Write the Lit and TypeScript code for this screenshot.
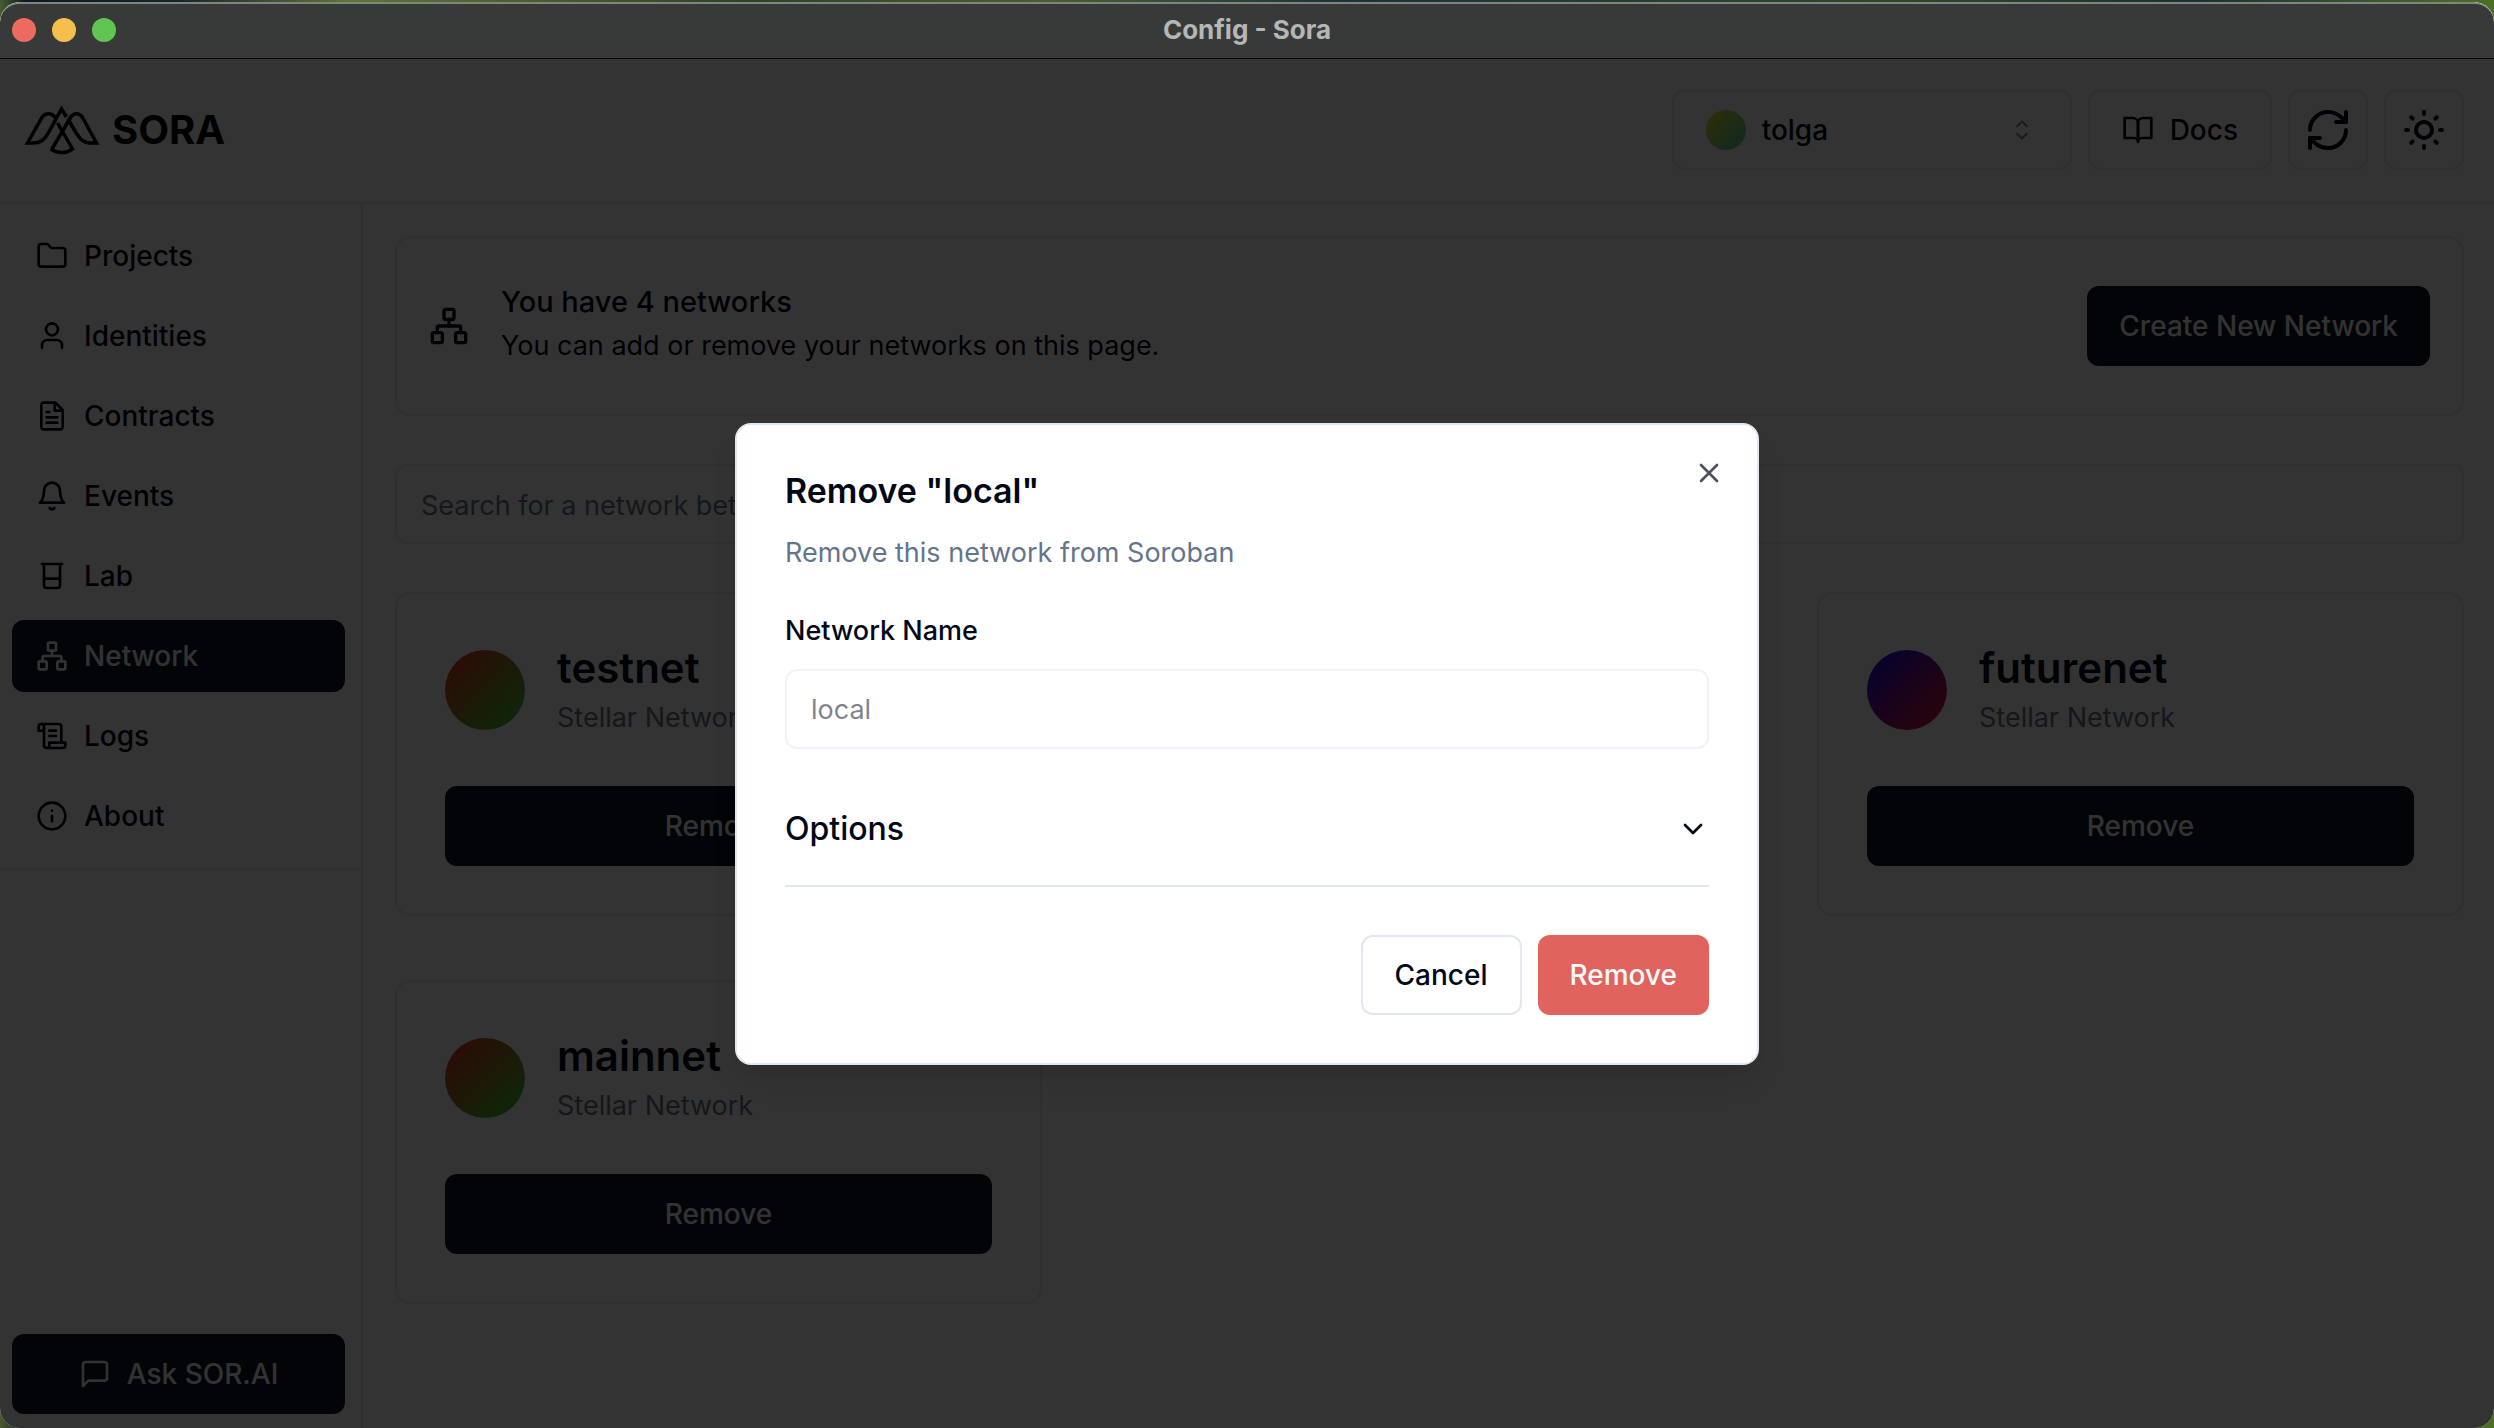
import { LitElement, html, css, svg } from "lit";
import { customElement, property, state } from "lit/decorators.js";
import { classMap } from "lit/directives/class-map.js";

const icons: Record<string, unknown> = {
  folder: svg`<path d="M4 20h16a2 2 0 0 0 2-2V8a2 2 0 0 0-2-2h-7.93a2 2 0 0 1-1.66-.9l-.82-1.2A2 2 0 0 0 7.93 3H4a2 2 0 0 0-2 2v13c0 1.1.9 2 2 2Z"/>`,
  user: svg`<circle cx="12" cy="7" r="4.5"/><path d="M19.500 21v-2a4 4 0 0 0-4-4h-7a4 4 0 0 0-4 4v2"/>`,
  file: svg`<path d="M14.500 2H6a2 2 0 0 0-2 2v16a2 2 0 0 0 2 2h12a2 2 0 0 0 2-2V7.500L14.500 2z"/><path d="M14 2v6h6"/><path d="M16 13H8"/><path d="M16 17H8"/><path d="M10 9H8"/>`,
  bell: svg`<path d="M6 8a6 6 0 0 1 12 0c0 7 3 9 3 9H3s3-2 3-9"/><path d="M10.300 21a1.940 1.940 0 0 0 3.400 0"/>`,
  beaker: svg`<path d="M4.500 3h15"/><path d="M6 3v16a2 2 0 0 0 2 2h8a2 2 0 0 0 2-2V3"/><path d="M6 14h12"/>`,
  network: svg`<rect x="16" y="16" width="6" height="6" rx="1"/><rect x="2" y="16" width="6" height="6" rx="1"/><rect x="9" y="2" width="6" height="6" rx="1"/><path d="M5 16v-3a1 1 0 0 1 1-1h12a1 1 0 0 1 1 1v3"/><path d="M12 12V8"/>`,
  scroll: svg`<path d="M8 21h12a2 2 0 0 0 2-2v-2H10v2a2 2 0 1 1-4 0V5a2 2 0 1 0-4 0v3h4"/><path d="M19 17V5a2 2 0 0 0-2-2H4"/><path d="M15 8h-5"/><path d="M15 12h-5"/>`,
  info: svg`<circle cx="12" cy="12" r="10"/><path d="M12 16v-4"/><path d="M12 8h.01"/>`,
  message: svg`<path d="M21 15a2 2 0 0 1-2 2H7l-4 4V5a2 2 0 0 1 2-2h14a2 2 0 0 1 2 2z"/>`,
  book: svg`<path d="M2 3h6a4 4 0 0 1 4 4v14a3 3 0 0 0-3-3H2z"/><path d="M22 3h-6a4 4 0 0 0-4 4v14a3 3 0 0 1 3-3h7z"/>`,
  refresh: svg`<path d="M3 12a9 9 0 0 1 9-9 9.750 9.750 0 0 1 6.740 2.740L21 8"/><path d="M21 3v5h-5"/><path d="M21 12a9 9 0 0 1-9 9 9.750 9.750 0 0 1-6.740-2.740L3 16"/><path d="M8 16H3v5"/>`,
  sun: svg`<circle cx="12" cy="12" r="4"/><path d="M12 3v1"/><path d="M12 20v1"/><path d="M3 12h1"/><path d="M20 12h1"/><path d="m18.364 5.636-.707.707"/><path d="m6.343 17.657-.707.707"/><path d="m5.636 5.636.707.707"/><path d="m17.657 17.657.707.707"/>`,
  close: svg`<path d="M18 6 6 18"/><path d="m6 6 12 12"/>`,
  chevron: svg`<path d="m6 9 6 6 6-6"/>`,
};

@customElement("ui-icon")
export class UiIcon extends LitElement {
  @property() name = "";

  static styles = css`
    :host {
      display: inline-flex;
      flex: none;
      width: 32px;
      height: 32px;
    }
    .glyph {
      width: 100%;
      height: 100%;
      fill: none;
      stroke: currentColor;
      stroke-width: 2;
      stroke-linecap: round;
      stroke-linejoin: round;
    }
  `;

  render() {
    return html`<svg class="glyph" viewBox="0 0 24 24" aria-hidden="true">${icons[this.name]}</svg>`;
  }
}

const navItems = [
  { icon: "folder", label: "Projects" },
  { icon: "user", label: "Identities" },
  { icon: "file", label: "Contracts" },
  { icon: "bell", label: "Events" },
  { icon: "beaker", label: "Lab" },
  { icon: "network", label: "Network" },
  { icon: "scroll", label: "Logs" },
  { icon: "info", label: "About" },
];

const networks = [
  { name: "testnet", tone: "warm" },
  { name: "local", tone: "cool" },
  { name: "futurenet", tone: "cool" },
  { name: "mainnet", tone: "warm" },
];

@customElement("app-root")
export class AppRoot extends LitElement {
  @state() private active = "Network";
  @state() private dialogOpen = true;

  static styles = css`
    :host {
      display: block;
      color: #020817;
      font-family: Inter, "Liberation Sans", sans-serif;
      font-size: 27px;
      line-height: 40px;
    }
    *,
    *::before,
    *::after {
      box-sizing: border-box;
    }
    h1,
    h2,
    h3,
    p {
      margin: 0;
    }
    button,
    input,
    select {
      font: inherit;
      color: inherit;
      margin: 0;
    }
    button {
      cursor: pointer;
    }
    a {
      color: inherit;
      text-decoration: none;
    }

    .desktop {
      display: flex;
      min-height: 100vh;
      padding-top: 2px;
      background: linear-gradient(90deg, #4a5a30 0%, #0b1c24 1%, #12262a 7%, #5f7530 14%, #2a4420 30%, #46602a 42%, #16343a 54%, #2c4a22 76%, #173230 88%, #4c7022 100%);
    }
    .window {
      flex: 1;
      display: flex;
      flex-direction: column;
      overflow: hidden;
      border-radius: 20px;
      background: #ffffff;
    }
    .titlebar {
      display: grid;
      grid-template-columns: 1fr auto 1fr;
      align-items: center;
      height: 57px;
      padding: 0 12px 2px;
      border-top: 2px solid #828483;
      border-bottom: 1px solid #000000;
      border-radius: 20px 20px 0 0;
      background: #383a39;
    }
    .lights {
      display: flex;
      gap: 16px;
    }
    .light {
      width: 24px;
      height: 24px;
      padding: 0;
      border: 0;
      border-radius: 50%;
    }
    .light.red {
      background: #ed6a5e;
    }
    .light.amber {
      background: #f5bf4f;
    }
    .light.green {
      background: #61c554;
    }
    .window-title {
      color: #b5b6b6;
      font-size: 26px;
      line-height: 32px;
      font-weight: 700;
    }

    .body {
      position: relative;
      flex: 1;
      display: flex;
      flex-direction: column;
    }
    .topbar {
      display: flex;
      align-items: center;
      justify-content: space-between;
      padding: 31px 30px 32px 24px;
      border-bottom: 2px solid #e2e8f0;
    }
    .brand {
      display: flex;
      align-items: center;
      gap: 12px;
      color: #000000;
      font-size: 40px;
      line-height: 48px;
      font-weight: 700;
    }
    .brand-mark {
      width: 76px;
      height: 52px;
      fill: none;
      stroke: currentColor;
      stroke-width: 3.5;
      stroke-linejoin: miter;
    }
    .tools {
      display: flex;
      gap: 16px;
    }
    .account,
    .tool {
      display: flex;
      align-items: center;
      height: 80px;
      gap: 16px;
      border: 2px solid #e2e8f0;
      border-radius: 12px;
      background: #ffffff;
      font-size: 28px;
      font-weight: 500;
    }
    .account {
      width: 400px;
      padding: 0 32px;
    }
    .account-avatar {
      flex: none;
      width: 40px;
      height: 40px;
      border-radius: 50%;
      background: linear-gradient(135deg, #f0e614, #3cc8b4);
    }
    .account-select {
      flex: 1;
      min-width: 0;
      padding: 0;
      border: 0;
      appearance: none;
      background: transparent;
    }
    .caret {
      flex: none;
      width: 32px;
      height: 32px;
      fill: currentColor;
      opacity: 0.5;
    }
    .tool {
      padding: 0 32px;
    }
    .tool.square {
      width: 80px;
      padding: 0;
      justify-content: center;
    }
    .tool.square ui-icon {
      width: 48px;
      height: 48px;
    }

    .columns {
      flex: 1;
      display: flex;
    }
    .sidebar {
      flex: none;
      display: flex;
      flex-direction: column;
      justify-content: space-between;
      width: 363px;
      border-right: 2px solid #e2e8f0;
    }
    .nav {
      display: flex;
      flex-direction: column;
      gap: 8px;
      padding: 16px 16px 16px 12px;
      border-bottom: 2px solid #e2e8f0;
    }
    .nav-link {
      display: flex;
      align-items: center;
      gap: 16px;
      height: 72px;
      padding: 0 24px;
      border-radius: 12px;
      font-size: 28px;
      font-weight: 500;
    }
    .nav-link.active {
      background: #0f172a;
      color: #f8fafc;
    }
    .ask {
      display: flex;
      padding: 14px 16px 14px 12px;
    }

    .primary {
      display: flex;
      align-items: center;
      justify-content: center;
      gap: 16px;
      height: 80px;
      padding: 0 32px;
      border: 0;
      border-radius: 12px;
      background: #0f172a;
      color: #f8fafc;
      font-size: 28px;
      font-weight: 500;
    }
    .primary.wide {
      width: 100%;
    }

    .main {
      flex: 1;
      min-width: 0;
      display: flex;
      flex-direction: column;
      gap: 48px;
      padding: 32px 30px 32px 32px;
    }
    .summary {
      display: flex;
      align-items: center;
      gap: 32px;
      padding: 48px 32px;
      border: 2px solid #e2e8f0;
      border-radius: 16px;
    }
    .summary ui-icon {
      width: 40px;
      height: 40px;
    }
    .summary-text {
      flex: 1;
      display: flex;
      flex-direction: column;
      gap: 8px;
    }
    .summary-title {
      font-size: 29px;
      line-height: 32px;
      font-weight: 500;
    }
    .field {
      width: 100%;
      height: 80px;
      padding: 2px 24px 0;
      border: 2px solid #e2e8f0;
      border-radius: 12px;
      background: #ffffff;
    }
    .field::placeholder {
      color: #64748b;
      opacity: 1;
    }
    .field:disabled {
      opacity: 0.5;
    }
    .cards {
      display: grid;
      grid-template-columns: repeat(3, minmax(0, 1fr));
      gap: 64px;
    }
    .card {
      display: flex;
      flex-direction: column;
      gap: 48px;
      padding: 48px;
      border: 2px solid #e2e8f0;
      border-radius: 16px;
    }
    .card-head {
      display: flex;
      align-items: center;
      gap: 32px;
    }
    .card-text {
      display: flex;
      flex-direction: column;
      gap: 4px;
    }
    .avatar {
      flex: none;
      width: 80px;
      height: 80px;
      border-radius: 50%;
    }
    .avatar.warm {
      background: linear-gradient(135deg, #f5281e, #28d22d);
    }
    .avatar.cool {
      background: linear-gradient(135deg, #0a0af5, #f0141e);
    }
    .card-title {
      font-size: 42px;
      line-height: 52px;
      font-weight: 600;
    }
    .muted {
      color: #64748b;
    }

    .overlay {
      position: absolute;
      inset: 0;
      display: grid;
      place-items: center;
      background: rgba(0, 0, 0, 0.8);
    }
    .dialog {
      position: relative;
      width: 1024px;
      max-width: 100%;
      padding: 48px;
      border: 2px solid #e2e8f0;
      border-radius: 16px;
      background: #ffffff;
      box-shadow: 0 20px 30px -6px rgba(0, 0, 0, 0.1), 0 8px 12px -8px rgba(0, 0, 0, 0.1);
    }
    .dialog-head {
      display: flex;
      flex-direction: column;
      gap: 24px;
      margin-bottom: 40px;
    }
    .dialog-title {
      font-size: 34px;
      line-height: 36px;
      font-weight: 600;
    }
    .dialog-label {
      display: block;
      margin-bottom: 20px;
      line-height: 36px;
      font-weight: 500;
    }
    .options {
      display: flex;
      align-items: center;
      justify-content: space-between;
      width: 100%;
      margin: 24px 0 48px;
      padding: 32px 0;
      border: 0;
      border-bottom: 2px solid #e2e8f0;
      background: transparent;
      font-size: 32px;
      line-height: 48px;
      font-weight: 500;
    }
    .actions {
      display: flex;
      justify-content: flex-end;
      gap: 16px;
    }
    .primary.danger {
      background: #e0635d;
    }
    .close {
      position: absolute;
      top: 32px;
      right: 32px;
      display: flex;
      padding: 0;
      border: 0;
      background: transparent;
      opacity: 0.7;
    }
  `;

  private close() {
    this.dialogOpen = false;
  }

  private renderHeader() {
    return html`
      <header class="topbar">
        <a class="brand" href="#home">
          <svg class="brand-mark" viewBox="0 0 76 52" aria-hidden="true">
            <path d="M31.500 14 C28 8.500 21 8.500 18 13.500 L3.500 39 H9 C16.500 39 20 36 24 29.500 L37.500 5 L42.500 13" />
            <path d="M28 45 L46.500 13.500 C49.500 8.500 55.500 8.500 58.500 13.500 L72.500 39 H68 C60 39 56.500 36 52.500 29.500 L44.500 16" />
            <path d="M33.500 19 L48.500 45 C42 49.500 34 49.500 26.500 45" />
          </svg>
          <span>SORA</span>
        </a>
        <div class="tools">
          <div class="account">
            <span class="account-avatar"></span>
            <select class="account-select" aria-label="Account">
              <option>tolga</option>
            </select>
            <svg class="caret" viewBox="0 0 15 15" aria-hidden="true">
              <path d="M4.932 5.432C4.756 5.608 4.756 5.892 4.932 6.068C5.108 6.244 5.392 6.244 5.568 6.068L7.500 4.136L9.432 6.068C9.608 6.244 9.892 6.244 10.068 6.068C10.243 5.892 10.243 5.608 10.068 5.432L7.818 3.182C7.734 3.097 7.619 3.050 7.500 3.050C7.381 3.050 7.266 3.097 7.182 3.182L4.932 5.432ZM10.068 9.568L7.818 11.818C7.734 11.903 7.619 11.950 7.500 11.950C7.381 11.950 7.266 11.903 7.182 11.818L4.932 9.568C4.756 9.392 4.756 9.108 4.932 8.932C5.108 8.756 5.392 8.756 5.568 8.932L7.500 10.864L9.432 8.932C9.608 8.756 9.892 8.756 10.068 8.932C10.243 9.108 10.243 9.392 10.068 9.568Z" />
            </svg>
          </div>
          <button class="tool"><ui-icon name="book"></ui-icon>Docs</button>
          <button class="tool square" aria-label="Refresh"><ui-icon name="refresh"></ui-icon></button>
          <button class="tool square" aria-label="Theme"><ui-icon name="sun"></ui-icon></button>
        </div>
      </header>
    `;
  }

  private renderSidebar() {
    return html`
      <aside class="sidebar">
        <nav class="nav">
          ${navItems.map(
            (item) => html`
              <a
                class=${classMap({ "nav-link": true, active: item.label === this.active })}
                href="#${item.label.toLowerCase()}"
                @click=${() => (this.active = item.label)}
              >
                <ui-icon name=${item.icon}></ui-icon>${item.label}
              </a>
            `
          )}
        </nav>
        <div class="ask">
          <button class="primary wide"><ui-icon name="message"></ui-icon>Ask SOR.AI</button>
        </div>
      </aside>
    `;
  }

  private renderMain() {
    return html`
      <main class="main">
        <section class="summary">
          <ui-icon name="network"></ui-icon>
          <div class="summary-text">
            <h1 class="summary-title">You have ${networks.length} networks</h1>
            <p>You can add or remove your networks on this page.</p>
          </div>
          <button class="primary">Create New Network</button>
        </section>
        <input
          class="field"
          type="search"
          aria-label="Search networks"
          placeholder="Search for a network between ${networks.length} networks"
        />
        <section class="cards">
          ${networks.map(
            (network) => html`
              <article class="card">
                <div class="card-head">
                  <span class="avatar ${network.tone}"></span>
                  <div class="card-text">
                    <h2 class="card-title">${network.name}</h2>
                    <p class="muted">Stellar Network</p>
                  </div>
                </div>
                <button class="primary wide">Remove</button>
              </article>
            `
          )}
        </section>
      </main>
    `;
  }

  private renderDialog() {
    return html`
      <div class="overlay">
        <div class="dialog" role="dialog" aria-modal="true" aria-labelledby="dialog-title">
          <div class="dialog-head">
            <h2 class="dialog-title" id="dialog-title">Remove "local"</h2>
            <p class="muted">Remove this network from Soroban</p>
          </div>
          <label class="dialog-label" for="network-name">Network Name</label>
          <input class="field" id="network-name" type="text" value="local" disabled />
          <button class="options" aria-expanded="false">
            Options<ui-icon name="chevron"></ui-icon>
          </button>
          <div class="actions">
            <button class="tool" @click=${this.close}>Cancel</button>
            <button class="primary danger" @click=${this.close}>Remove</button>
          </div>
          <button class="close" aria-label="Close" @click=${this.close}>
            <ui-icon name="close"></ui-icon>
          </button>
        </div>
      </div>
    `;
  }

  render() {
    return html`
      <div class="desktop">
        <div class="window">
          <div class="titlebar">
            <div class="lights">
              <button class="light red" aria-label="Close window"></button>
              <button class="light amber" aria-label="Minimize window"></button>
              <button class="light green" aria-label="Zoom window"></button>
            </div>
            <div class="window-title">Config - Sora</div>
          </div>
          <div class="body">
            ${this.renderHeader()}
            <div class="columns">${this.renderSidebar()} ${this.renderMain()}</div>
            ${this.dialogOpen ? this.renderDialog() : ""}
          </div>
        </div>
      </div>
    `;
  }
}
